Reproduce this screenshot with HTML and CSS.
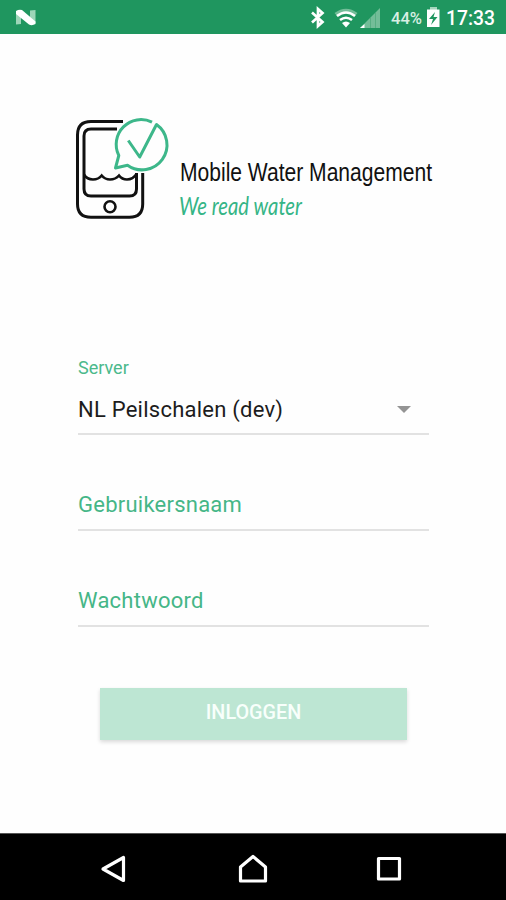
FILE: index.html
```
<!DOCTYPE html>
<html lang="nl">
    <head>
        <title>Mobile Water Management</title>
        <meta charset="UTF-8">
        <link rel="stylesheet" href="styles.css">
    </head>
    <body>
        <div class="status-bar">
            <svg class="logo-n" width="22" height="18" viewBox="0 0 22 18">
                <path d="M1 3L6 2V15L1 15.500ZM15 1.500L20.500 1V14L15 15Z" fill="#9dd6b8"/>
                <path d="M1 2Q4 0 7 1L20.500 12.500V15Q17 17 14 15.500L1 5Z" fill="#fff"/>
            </svg>
            <div class="status-icons">
                <svg width="196" height="34" viewBox="310 0 196 34">
                    <path d="M312 12.500L322.500 22L318 26V9L322.500 13L312 22.500" fill="none" stroke="#fff" stroke-width="2.700"/>
                    <path d="M334.500 13Q346 4.500 357.500 13L354.500 16.500Q346 10.500 337.500 16.500Z" fill="#73bd98"/>
                    <path d="M337 16Q346 9 355 16M340 20Q346 15.500 352 20" fill="none" stroke="#fff" stroke-width="2.600"/>
                    <path d="M342 23Q346 20 350 23L346 27.500Z" fill="#fff"/>
                    <path d="M360 28L380 8V28Z" fill="#73bd98"/>
                    <path d="M360 28L364.500 24V28Z" fill="#fff"/>
                    <path d="M370.500 18V28M375.500 13V28" stroke="#56ae82" stroke-width="1"/>
                    <text class="battery" x="391" y="24" textLength="31" lengthAdjust="spacingAndGlyphs">44%</text>
                    <path d="M430 7H437V10H430Z" fill="#a5d5bc"/>
                    <path d="M427 9.500H439.500V27H427Z" fill="#fff"/>
                    <path d="M435 12L429 19H433L431 25L437.500 17H433.500Z" fill="#1f965f"/>
                    <text class="clock" x="446" y="25" textLength="49" lengthAdjust="spacingAndGlyphs">17:33</text>
                </svg>
            </div>
        </div>

        <div class="main">
            <!-- Logo -->
            <svg class="logo" width="436" height="110" viewBox="70 114 436 110">
                <g fill="none" stroke="#111" stroke-width="3">
                    <path d="M123 121.500H91Q77.500 121.500 77.500 135V204Q77.500 217.300 91 217.300H129.500Q142.700 217.300 142.700 204V173"/>
                    <path d="M117 129H91Q84 129 84 136V189Q84 196 91 196H129.500Q136.500 196 136.500 189V173"/>
                    <path d="M84 174.500Q87 179.500 93 179.500Q98.500 179.500 101.700 175.500Q105 179.500 110 179.500Q115.500 179.500 119 175.500Q122 179.500 127 179.500Q133 179.500 136.500 174" stroke-width="2.600"/>
                    <circle cx="110" cy="206.700" r="5.500" stroke-width="2.600"/>
                </g>
                <g class="bubble">
                    <path d="M152 122.200A24.800 24.800 0 0 0 118.800 155.500L115.500 168L127.500 165.200A24.800 24.800 0 1 0 156.500 124.500L139.700 157L128.300 140.500"/>
                </g>
                <text class="name" x="180" y="181" textLength="252" lengthAdjust="spacingAndGlyphs">Mobile Water Management</text>
                <text class="slogan" x="179" y="215" textLength="123" lengthAdjust="spacingAndGlyphs">We read water</text>
            </svg>

            <!-- Login form -->
            <form class="form">
                <label class="label">Server</label>
                <div class="field select">
                    <span>NL Peilschalen (dev)</span>
                    <div class="arrow"></div>
                </div>
                <input class="field" type="text" placeholder="Gebruikersnaam">
                <input class="field" type="password" placeholder="Wachtwoord">
                <button class="button" type="button">INLOGGEN</button>
            </form>
        </div>

        <div class="nav-bar">
            <svg width="32" height="32" viewBox="0 0 32 32"><path d="M5 16L25.500 4.500V27.500Z"/></svg>
            <svg class="home" width="32" height="32" viewBox="0 0 32 32"><path d="M3.500 28V14L16 3.500L28.500 14V28Z"/></svg>
            <svg width="32" height="32" viewBox="0 0 32 32"><path d="M5.500 5.500H26.500V26H5.500Z"/></svg>
        </div>
    </body>
</html>
```
FILE: styles.css
```
body {
    display: flex;
    flex-direction: column;
    height: 900px;
    margin: 0;
    background: #fefefe;
    font-family: Roboto, sans-serif;
}

/* Status bar */
.status-bar {
    display: flex;
    justify-content: space-between;
    height: 34px;
    background: #1f965f;
}
.logo-n {
    margin: 9px 0 0 15px;
}
.status-icons {
    height: 34px;
}
.battery {
    font-size: 16.5px;
    font-weight: 500;
    fill: #d9efe3;
}
.clock {
    font-size: 20px;
    font-weight: 500;
    fill: #fff;
}

/* Logo */
.main {
    flex: 1;
    padding: 80px 0 0;
}
.logo {
    display: block;
    margin-left: 70px;
}
.bubble {
    fill: none;
    stroke: #3db78a;
    stroke-width: 3px;
    stroke-linejoin: round;
}
.name {
    font-family: "Liberation Sans Narrow", "Liberation Sans", sans-serif;
    font-size: 26.5px;
    fill: #111;
}
.slogan {
    font-family: Lato, sans-serif;
    font-size: 25px;
    font-style: italic;
    fill: #35b586;
}

/* Form */
.form {
    display: flex;
    flex-direction: column;
    width: 351px;
    margin: 134px 0 0 78px;
}
.label {
    height: 20px;
    line-height: 20px;
    font-size: 18px;
    color: #4bb98b;
}
.field {
    box-sizing: border-box;
    height: 50px;
    margin: 0 0 46px;
    padding: 0 0 2px;
    border: 0;
    border-bottom: 2px solid #e2e2e2;
    background: none;
    font-family: Roboto, sans-serif;
    font-size: 22px;
    letter-spacing: 0.24px;
    color: #1c1c1c;
    outline: none;
}
.field::placeholder {
    color: #45b687;
}
.select {
    display: flex;
    align-items: center;
    justify-content: space-between;
    height: 57px;
    padding: 7px 0 0;
}
.arrow {
    margin-right: 18px;
    border: 7px solid transparent;
    border-top-color: #949494;
    border-bottom: 0;
}
.button {
    width: 307px;
    height: 52px;
    margin: 15px 0 0 22px;
    padding: 0 0 3px;
    border: 0;
    background: #bde6d3;
    box-shadow: 0 2px 4px rgba(0, 0, 0, 0.15);
    font-family: Roboto, sans-serif;
    font-size: 19.8px;
    font-weight: 500;
    color: #f8fffb;
}

/* Navigation bar */
.nav-bar {
    display: flex;
    justify-content: space-between;
    height: 67px;
    padding: 19px 101px 0 98px;
    box-sizing: border-box;
    border-top: 1px solid #555;
    background: #000;
}
.nav-bar path {
    fill: none;
    stroke: #fff;
    stroke-width: 3.2px;
    stroke-linejoin: round;
}
.home {
    margin-left: 3px;
}
```
